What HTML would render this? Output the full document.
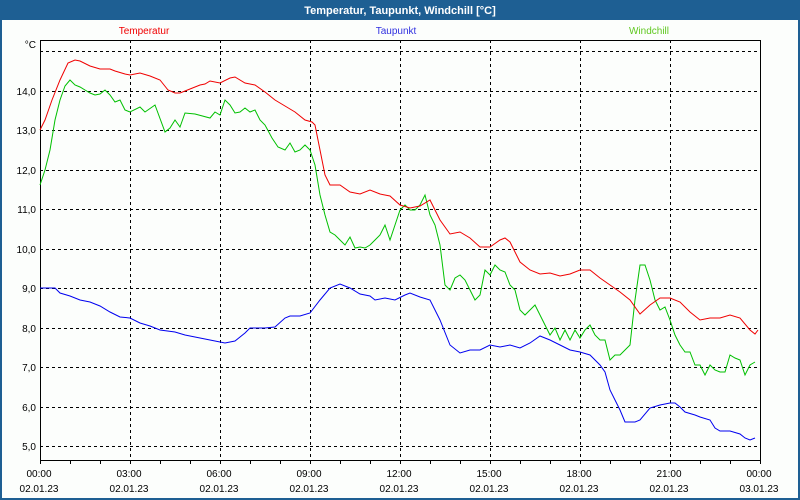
<!DOCTYPE html><html><head><meta charset="utf-8"><style>
body{margin:0;width:800px;height:500px;overflow:hidden;background:#1e5f93;font-family:"Liberation Sans",sans-serif}
</style></head><body>
<svg width="800" height="500" xmlns="http://www.w3.org/2000/svg" style="position:absolute;left:0;top:0">
<rect x="0" y="0" width="800" height="500" fill="#1e5f93"/>
<rect x="2" y="20" width="796" height="478" fill="#fcfefc"/>
<text x="400" y="14" text-anchor="middle" fill="#fff" font-size="11" font-weight="bold" font-family="Liberation Sans">Temperatur, Taupunkt, Windchill [°C]</text>
<g font-size="10" text-anchor="middle" font-family="Liberation Sans">
<text x="144" y="34" fill="#f00000">Temperatur</text>
<text x="396" y="34" fill="#3030e0">Taupunkt</text>
<text x="649" y="34" fill="#60c820">Windchill</text>
</g>
<g stroke="#000" stroke-dasharray="3,3" stroke-width="1">
<path d="M40 51.5H760M40 91.5H760M40 130.5H760M40 170.5H760M40 209.5H760M40 249.5H760M40 288.5H760M40 328.5H760M40 367.5H760M40 407.5H760M40 446.5H760"/>
<path d="M130.5 40V460M220.5 40V460M310.5 40V460M400.5 40V460M490.5 40V460M580.5 40V460M670.5 40V460"/>
</g>
<rect x="40.5" y="40.5" width="720" height="420" fill="none" stroke="#000"/>
<path stroke="#000" d="M70.5 460v4M100.5 460v4M130.5 460v4M160.5 460v4M190.5 460v4M220.5 460v4M250.5 460v4M280.5 460v4M310.5 460v4M340.5 460v4M370.5 460v4M400.5 460v4M430.5 460v4M460.5 460v4M490.5 460v4M520.5 460v4M550.5 460v4M580.5 460v4M610.5 460v4M640.5 460v4M670.5 460v4M700.5 460v4M730.5 460v4M40.5 460v4M760.5 460v4"/>
<g font-size="10" text-anchor="end" fill="#000" font-family="Liberation Sans">
<text x="36" y="48">°C</text>
<text x="36" y="95">14,0</text><text x="36" y="134">13,0</text><text x="36" y="174">12,0</text><text x="36" y="213">11,0</text><text x="36" y="253">10,0</text><text x="36" y="292">9,0</text><text x="36" y="332">8,0</text><text x="36" y="371">7,0</text><text x="36" y="411">6,0</text><text x="36" y="450">5,0</text>
</g>
<g font-size="10" text-anchor="middle" fill="#000" font-family="Liberation Sans">
<text x="39" y="477">00:00</text><text x="39" y="492">02.01.23</text>
<text x="129" y="477">03:00</text><text x="129" y="492">02.01.23</text>
<text x="219" y="477">06:00</text><text x="219" y="492">02.01.23</text>
<text x="309" y="477">09:00</text><text x="309" y="492">02.01.23</text>
<text x="399" y="477">12:00</text><text x="399" y="492">02.01.23</text>
<text x="489" y="477">15:00</text><text x="489" y="492">02.01.23</text>
<text x="579" y="477">18:00</text><text x="579" y="492">02.01.23</text>
<text x="669" y="477">21:00</text><text x="669" y="492">02.01.23</text>
<text x="759" y="477">00:00</text><text x="759" y="492">03.01.23</text>
</g>
<g fill="none" stroke-width="1">
<polyline stroke="#00c000" points="40,185 45,170 50,150 55,120 60,100 65,86 70,80 75,85 80,87 85,90 90,93 95,95 100,94 105,90 110,95 115,102 120,100 125,110 130,112 140,107 145,112 155,105 165,132 170,128 175,120 180,127 185,113 195,114 210,118 215,112 220,115 225,100 230,105 235,113 240,112 245,108 250,112 255,110 260,120 265,125 272,138 278,147 285,150 290,143 295,152 300,150 305,145 310,150 315,165 320,195 325,215 330,232 335,235 340,240 345,245 350,237 355,248 360,247 365,248 370,245 375,240 380,235 385,225 390,240 395,225 400,210 405,205 410,210 415,210 420,205 425,195 430,215 435,225 440,245 445,285 450,290 455,278 460,275 465,280 470,290 475,300 480,295 485,270 490,275 495,265 500,270 505,272 510,285 515,290 520,310 525,315 530,310 535,305 540,315 545,325 550,335 555,328 560,340 565,330 570,340 575,330 580,338 585,330 590,325 595,335 600,340 605,340 610,360 615,355 620,355 625,350 630,345 635,300 640,265 645,265 650,280 655,300 660,310 665,307 670,320 675,335 680,345 685,352 690,352 695,365 700,365 705,375 710,365 715,370 720,372 725,372 730,355 735,358 740,360 745,375 750,365 755,362"/>
<polyline stroke="#f00000" points="40,130 45,120 52,100 60,80 68,63 75,60 80,61 90,66 100,69 110,69 115,71 125,74 130,75 140,73 150,76 160,80 168,90 175,93 180,93 190,89 200,85 205,84 210,81 220,83 230,78 235,77 245,83 255,85 265,92 275,100 285,106 295,112 305,120 312,122 315,125 320,150 325,175 330,185 340,185 350,192 360,194 370,190 380,194 390,196 400,205 410,208 420,206 430,200 440,220 450,234 460,232 470,238 480,247 490,247 500,240 505,238 510,242 520,262 530,270 540,274 550,273 560,276 570,274 580,270 590,270 600,278 610,285 620,292 630,300 640,314 650,305 660,298 670,298 680,302 690,312 700,320 710,318 720,318 730,315 740,318 750,330 755,334 758,330"/>
<polyline stroke="#0000f0" points="40,288 55,288 60,293 70,296 80,300 90,302 100,306 110,312 120,317 130,318 140,323 150,326 160,330 175,332 185,335 200,338 215,341 225,343 235,341 245,333 250,328 265,328 275,327 285,318 290,316 300,316 310,313 320,300 330,288 340,284 350,288 360,294 370,296 375,300 385,298 395,300 405,295 410,293 420,297 430,300 440,320 450,345 460,353 470,350 480,350 490,345 500,347 510,345 520,348 530,343 540,336 550,340 560,345 570,350 580,352 590,355 600,365 605,372 610,390 615,400 620,410 625,422 635,422 640,420 650,408 660,405 670,403 675,403 680,407 685,412 695,415 700,417 710,420 715,428 720,431 730,431 740,434 745,438 750,440 755,438"/>
</g>
</svg>
</body></html>
